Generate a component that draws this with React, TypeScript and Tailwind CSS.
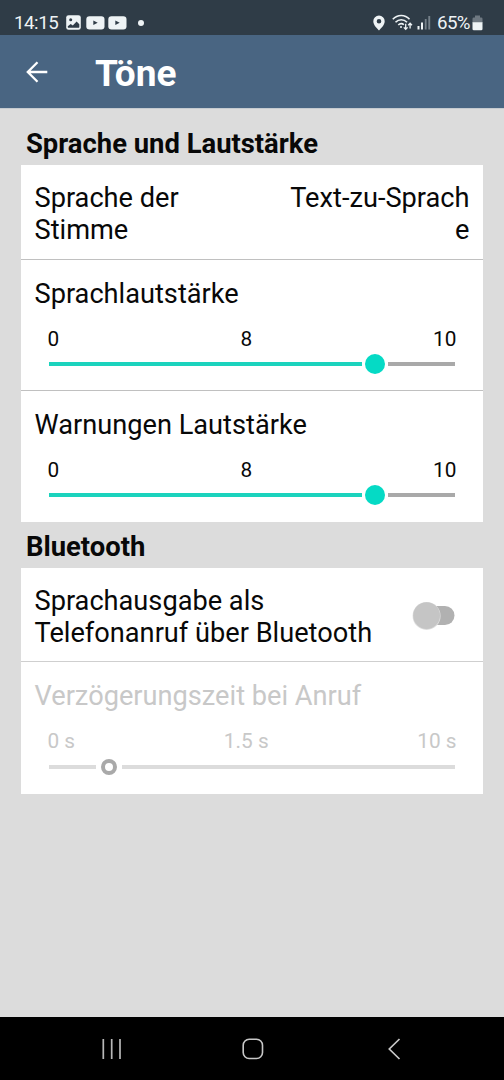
import React from "react";

type SliderRowProps = {
  title: string;
  min: string;
  value: string;
  max: string;
  disabled?: boolean;
};

function SliderRow({ title, min, value, max, disabled = false }: SliderRowProps) {
  return (
    <div className={disabled ? "text-[#c8c8c8]" : "text-[#080808]"}>
      <div className="pl-[13.5px] pt-[18px] text-[27.2px] leading-[32px]">{title}</div>
      <div className="mt-[17px] grid grid-cols-3 pl-[26.5px] pr-[26.5px] text-[20.8px] leading-6">
        <span>{min}</span>
        <span className="pr-[11.5px] text-center">{value}</span>
        <span className="text-right">{max}</span>
      </div>
      {disabled ? (
        <div className="mt-[4px] flex h-5 items-center pl-[28px] pr-[28px]">
          <div className="h-1 w-[47px] bg-[#dcdcdc]" />
          <div className="ml-[5px] mr-[5px] size-4 rounded-full border-4 border-[#a9a9a9]" />
          <div className="h-1 grow bg-[#dcdcdc]" />
        </div>
      ) : (
        <div className="mt-[3px] flex h-5 items-center pl-[28px] pr-[28px]">
          <div className="h-1 w-[313px] bg-[#1bd3bd]" />
          <div className="mx-[3px] size-5 rounded-full bg-[#05dac5]" />
          <div className="h-1 grow bg-[#a9a9a9]" />
        </div>
      )}
    </div>
  );
}

function VideoBadge() {
  return (
    <svg width="19" height="14" viewBox="0 0 19 14">
      <rect x="0.3" y="0.3" width="18.2" height="13.2" rx="3.2" fill="#eef3f5" />
      <path d="M7.3 4.5v4.6l4.4-2.3z" fill="#2f3c47" />
    </svg>
  );
}

function StatusBar() {
  return (
    <div className="flex h-[35px] items-center bg-[#2f3c47] pl-[14px] pr-[21px] pt-[10px] text-[18.7px] text-[#eef3f5]">
      <span className="w-[52px] pt-px tracking-[-0.45px]">14:15</span>
      <svg width="15" height="15" viewBox="0 0 15 15">
        <rect x="0.2" y="0.2" width="14.6" height="14.6" rx="2.4" fill="#eef3f5" />
        <circle cx="4.7" cy="4.7" r="1.5" fill="#2f3c47" />
        <path d="M1.8 11.2l2.9-2.3 2.1 1.7 3.800-4.200 2.700 2.800v2.700q0 .9-.9.9H2.700q-.9 0-.9-.9z" fill="#2f3c47" />
      </svg>
      <span className="ml-[5px] flex gap-[3px]">
        <VideoBadge />
        <VideoBadge />
      </span>
      <span className="ml-[10.5px] size-[6px] rounded-full bg-[#eef3f5]" />
      <span className="grow" />
      <svg width="12" height="16" viewBox="0 0 12 16">
        <path fillRule="evenodd" d="M6 .5a5.7 5.7 0 0 0-5.7 5.7C.3 10 4.4 13.7 6 15.4 7.6 13.7 11.7 10 11.7 6.2A5.7 5.7 0 0 0 6 .5zM6 4a2.3 2.3 0 1 1 0 4.6A2.3 2.3 0 0 1 6 4z" fill="#eef3f5" />
      </svg>
      <svg className="ml-[7px]" width="21" height="17" viewBox="0 0 21 17" fill="none" stroke="#eef3f5">
        <path d="M.8 5.3C5.5.2 13 .2 17.5 5.3M3.500 8.300c3.300-3.500 8.200-3.500 11.500 0M6.300 11c1.800-1.800 4-1.800 5.500-.2" strokeWidth="1.6" />
        <circle cx="9" cy="13" r="1" fill="#eef3f5" stroke="none" />
        <path d="M13.700 9.800v5.500M11.800 13.400l1.900 2 1.900-2M18.100 14.500V9.200M16.200 11.200l1.900-2 1.900 2" strokeWidth="1.3" />
      </svg>
      <svg className="ml-[4px]" width="14" height="15" viewBox="0 0 14 15">
        <path d="M.5 11h2v3.500h-2zM4 7.500h2v7H4z" fill="#eef3f5" />
        <path d="M7.800 4h1.800v10.500H7.800zM11.300 1h1.900v13.500h-1.900z" fill="#758089" />
      </svg>
      <span className="ml-[6px] w-[35px] whitespace-nowrap pt-px tracking-[-0.6px]">65%</span>
      <svg width="11" height="16" viewBox="0 0 11 16">
        <path d="M3 0.500h5v2h1.200q1.300 0 1.300 1.300V8H.5V3.800q0-1.300 1.300-1.300H3z" fill="#6e7881" />
        <path d="M.5 7.300h10v6.600q0 1.300-1.300 1.300H1.800q-1.300 0-1.300-1.300z" fill="#eef3f5" />
      </svg>
    </div>
  );
}

export default function App() {
  return (
    <main className="flex h-[1080px] w-[504px] flex-col bg-[#dcdcdc] font-[Roboto,sans-serif] text-[#080808]">
      <StatusBar />
      <header className="flex h-[73px] items-center bg-[#496582] pl-[26px] text-white">
        <svg width="22" height="22" viewBox="0 0 22 22" fill="none" stroke="currentColor" strokeWidth="2.3">
          <path d="M21.3 11H2M11.500 1.300L1.800 11l9.700 9.700" />
        </svg>
        <h1 className="ml-[47px] pt-[5px] text-[37px] font-bold leading-[44px]">Töne</h1>
      </header>
      <div className="h-px bg-[#c6cbd0]" />
      <h2 className="h-[56px] pl-[26px] pt-[19px] text-[27.4px] font-bold leading-[32px]">
        Sprache und Lautstärke
      </h2>
      <section className="mx-[21px] h-[357px] bg-white">
        <div className="flex h-[95px] justify-between border-b border-[#c0c0c0] px-[13.5px] pt-[17px] text-[27.2px] leading-[32px]">
          <span className="w-[180px]">Sprache der Stimme</span>
          <span className="w-[190px] text-right">
            Text-zu-Sprach
            <br />e
          </span>
        </div>
        <div className="h-[131px] border-b border-[#c0c0c0]">
          <SliderRow title="Sprachlautstärke" min="0" value="8" max="10" />
        </div>
        <SliderRow title="Warnungen Lautstärke" min="0" value="8" max="10" />
      </section>
      <h2 className="h-[46px] pl-[26px] pt-[9px] text-[27.4px] font-bold leading-[32px]">Bluetooth</h2>
      <section className="mx-[21px] h-[226px] bg-white">
        <div className="flex h-[94px] justify-between border-b border-[#cfcfcf] pl-[13.5px] pr-[28px] pt-[17px] text-[27.2px] leading-[32px]">
          <span className="w-[345px]">
            Sprachausgabe als
            <br />
            Telefonanruf über Bluetooth
          </span>
          <svg className="mt-[16px] shrink-0" width="43" height="30" viewBox="0 0 43 30">
            <rect x="10" y="5" width="32.5" height="19" rx="9.5" fill="#b1b1b1" />
            <circle cx="14.6" cy="14.9" r="14" fill="#dedede" />
            <circle cx="14.6" cy="14.6" r="13.4" fill="#c5c5c5" />
          </svg>
        </div>
        <SliderRow title="Verzögerungszeit bei Anruf" min="0 s" value="1.5 s" max="10 s" disabled />
      </section>
      <div className="grow" />
      <nav className="flex h-[63px] items-center justify-between bg-black pl-[101px] pr-[103px]">
        <svg width="22" height="22" viewBox="0 0 22 22" stroke="#b8b8b8" strokeWidth="1.7">
          <path d="M2.300 1v20M10.700 1v20M19 1v20" />
        </svg>
        <svg className="mr-[5px]" width="22" height="22" viewBox="0 0 22 22" fill="none" stroke="#c8c8c8" strokeWidth="1.6">
          <rect x="1.200" y="1.200" width="19.300" height="19.300" rx="6" />
        </svg>
        <svg width="14" height="22" viewBox="0 0 14 22" fill="none" stroke="#c8c8c8" strokeWidth="1.7">
          <path d="M12.500 1L2.300 11l10.200 10" />
        </svg>
      </nav>
    </main>
  );
}
